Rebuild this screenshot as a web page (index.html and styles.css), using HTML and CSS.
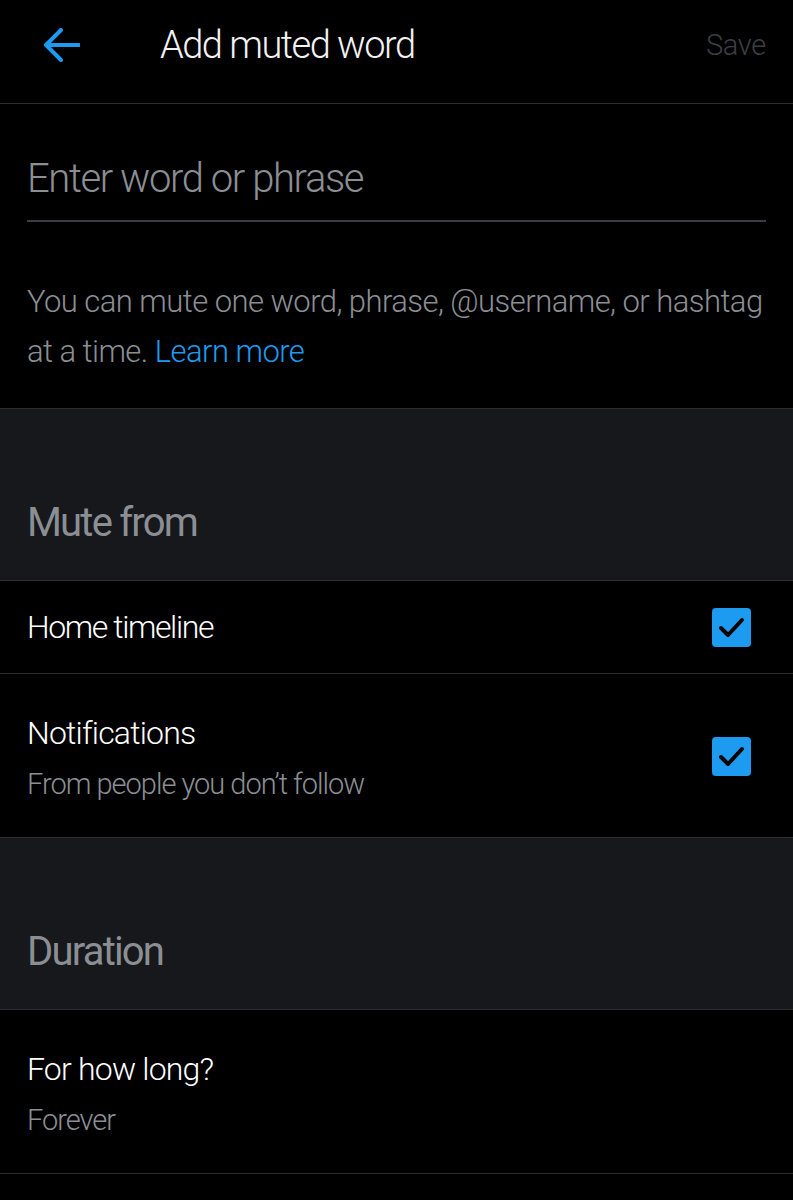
FILE: index.html
```html
<!DOCTYPE html>
<html lang="en">
<head>
  <meta charset="UTF-8" />
  <meta name="viewport" content="width=device-width, initial-scale=1" />
  <title>Add muted word</title>
  <link rel="stylesheet" href="styles.css">
</head>
<body>
  <div class="screen">
    <header class="top-bar">
      <button class="back-btn" aria-label="Back">
        <svg width="37" height="34" viewBox="0 0 37 34">
          <path d="M3 17H36M18 2L3 17L18 32" fill="none" stroke="currentColor" stroke-width="4" stroke-linecap="round" stroke-linejoin="round"/>
        </svg>
      </button>
      <h1 class="title">Add muted word</h1>
      <span class="save">Save</span>
    </header>

    <section class="compose">
      <div class="word-field">
        <input type="text" placeholder="Enter word or phrase" />
      </div>
      <p class="help">You can mute one word, phrase, @username, or hashtag at a time. <a href="#">Learn more</a></p>
    </section>

    <div class="section-head">Mute from</div>

    <div class="row row-single">
      <div class="row-text">
        <div class="row-title">Home timeline</div>
      </div>
      <span class="check"><svg width="39" height="39" viewBox="0 0 39 39"><path d="M9 20L16 27L30 12" fill="none" stroke="#000" stroke-width="4" stroke-linecap="round" stroke-linejoin="round"/></svg></span>
    </div>

    <div class="row">
      <div class="row-text">
        <div class="row-title">Notifications</div>
        <div class="row-sub">From people you don’t follow</div>
      </div>
      <span class="check"><svg width="39" height="39" viewBox="0 0 39 39"><path d="M9 20L16 27L30 12" fill="none" stroke="#000" stroke-width="4" stroke-linecap="round" stroke-linejoin="round"/></svg></span>
    </div>

    <div class="section-head">Duration</div>

    <div class="row">
      <div class="row-text">
        <div class="row-title">For how long?</div>
        <div class="row-sub">Forever</div>
      </div>
    </div>
  </div>
</body>
</html>
```

FILE: styles.css
```css
* {
  box-sizing: border-box;
  margin: 0;
  padding: 0;
}

body {
  background: #000;
  color: #fff;
  font-family: 'Roboto', 'Noto Sans', sans-serif;
  font-weight: 300;
}

.screen {
  width: 793px;
  min-height: 1200px;
  background: #000;
}

/* top bar */
.top-bar {
  height: 104px;
  display: flex;
  align-items: center;
  padding: 0 27px 14px 43px;
  border-bottom: 1px solid #2a2d30;
}

.back-btn {
  background: none;
  border: none;
  color: #1d9bf0;
  display: flex;
  width: 37px;
}

.title {
  flex: 1;
  margin-left: 80px;
  font-size: 38px;
  font-weight: 300;
  letter-spacing: -1.5px;
  color: #f2f2f2;
}

.save {
  font-size: 29px;
  letter-spacing: -0.3px;
  color: #3c3f42;
}

/* input + help */
.compose {
  padding: 40px 27px 31px;
  border-bottom: 1px solid #2a2d30;
}

.word-field {
  height: 78px;
  border-bottom: 2px solid #3a3d41;
  display: flex;
  align-items: center;
}

.word-field input {
  width: 100%;
  background: transparent;
  border: none;
  outline: none;
  font-family: inherit;
  font-weight: 300;
  font-size: 40px;
  letter-spacing: -1.4px;
  color: #fff;
  margin-top: -8px;
}

.word-field input::placeholder {
  color: #8b8f94;
}

.help {
  margin-top: 55px;
  font-size: 31px;
  line-height: 50px;
  color: #8b8f94;
  letter-spacing: -0.55px;
}

.help a {
  color: #1d9bf0;
  text-decoration: none;
}

/* gray section bands */
.section-head {
  height: 172px;
  background: #16181c;
  display: flex;
  align-items: flex-end;
  padding: 0 27px 32px;
  font-size: 40px;
  line-height: 50px;
  font-weight: 400;
  letter-spacing: -1.8px;
  color: #8b8f94;
  border-bottom: 1px solid #2a2d30;
}

/* list rows */
.row {
  display: flex;
  align-items: center;
  padding: 36px 42px 30px 27px;
  border-bottom: 1px solid #2a2d30;
}

.row-single {
  height: 93px;
  padding-top: 0;
  padding-bottom: 0;
}

.row-text {
  flex: 1;
}

.row-title {
  font-size: 32px;
  line-height: 46px;
  letter-spacing: -0.8px;
  color: #fff;
}

.row-single .row-title {
  letter-spacing: -1.4px;
}

.row-sub {
  margin-top: 5px;
  font-size: 29px;
  line-height: 46px;
  letter-spacing: -1px;
  color: #8b8f94;
}

.check {
  width: 39px;
  height: 39px;
  border-radius: 4px;
  background: #1d9bf0;
  display: flex;
}

.row-text + .check {
  margin-bottom: 4px;
}

.row-single .check {
  margin-bottom: 0;
}
```
